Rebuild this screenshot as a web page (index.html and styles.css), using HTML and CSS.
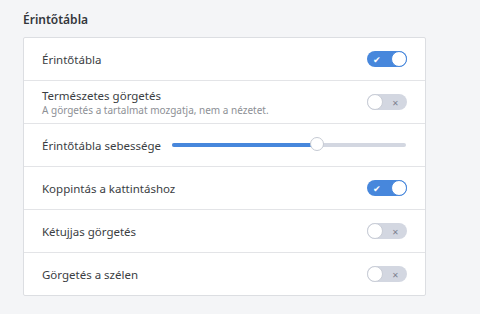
FILE: index.html
```html
<!DOCTYPE html>
<html lang="hu">
<head>
  <meta charset="UTF-8" />
  <title>Érintőtábla</title>
  <link rel="stylesheet" href="styles.css">
</head>
<body>
  <h2 class="section-title">Érintőtábla</h2>

  <div class="card">
    <div class="row">
      <span class="label">Érintőtábla</span>
      <span class="toggle on"><span class="mark">✔</span><span class="knob"></span></span>
    </div>
    <div class="row">
      <div class="texts">
        <span class="label">Természetes görgetés</span>
        <span class="sub">A görgetés a tartalmat mozgatja, nem a nézetet.</span>
      </div>
      <span class="toggle"><span class="knob"></span><span class="mark">✕</span></span>
    </div>
    <div class="row">
      <span class="label">Érintőtábla sebessége</span>
      <div class="slider">
        <div class="fill" style="width: 62%"></div>
        <div class="thumb" style="left: 62%"></div>
      </div>
    </div>
    <div class="row">
      <span class="label">Koppintás a kattintáshoz</span>
      <span class="toggle on"><span class="mark">✔</span><span class="knob"></span></span>
    </div>
    <div class="row">
      <span class="label">Kétujjas görgetés</span>
      <span class="toggle"><span class="knob"></span><span class="mark">✕</span></span>
    </div>
    <div class="row">
      <span class="label">Görgetés a szélen</span>
      <span class="toggle"><span class="knob"></span><span class="mark">✕</span></span>
    </div>
  </div>
</body>
</html>
```

FILE: styles.css
```css
body {
  margin: 0;
  background: #f4f5f7;
  font-family: "Noto Sans", sans-serif;
  color: #3a3d42;
  padding: 12px 54px 0 23px;
}
.section-title {
  font-size: 12px;
  font-weight: 600;
  margin: 0 0 9px 0;
  line-height: 16px;
  color: #33363b;
}
.card {
  background: #fff;
  border: 1px solid #dcdee2;
  border-radius: 2px;
}
.row {
  display: flex;
  align-items: center;
  justify-content: space-between;
  height: 42px;
  padding: 0 18px;
  border-top: 1px solid #e3e4e7;
}
.row:first-child {
  border-top: none;
}
.label {
  font-size: 11.5px;
  color: #3a3d42;
}
.texts {
  display: flex;
  flex-direction: column;
  line-height: 14px;
  padding-top: 2px;
}
.sub {
  font-size: 10px;
  color: #8d9096;
}
.toggle {
  display: flex;
  align-items: center;
  justify-content: space-between;
  width: 40px;
  height: 16px;
  border-radius: 8px;
  background: #d3d7e1;
  font-size: 8px;
  color: #7d8290;
  box-sizing: border-box;
}
.toggle.on {
  background: #4787dc;
  color: #fff;
  font-size: 9px;
}
.toggle .mark {
  padding: 0 8px;
}
.toggle.on .mark {
  padding: 0 6px;
}
.knob {
  width: 16px;
  height: 16px;
  border-radius: 50%;
  background: #fff;
  border: 1px solid #c9cdd6;
  box-sizing: border-box;
}
.toggle.on .knob {
  border-color: #4787dc;
}
.slider {
  position: relative;
  width: 234px;
  height: 4px;
  border-radius: 2px;
  background: #d3d7e1;
  margin-right: 1px;
}
.fill {
  height: 4px;
  border-radius: 2px;
  background: #4787dc;
}
.thumb {
  position: absolute;
  top: -6px;
  width: 14px;
  height: 14px;
  margin-left: -7px;
  border-radius: 50%;
  background: #fff;
  border: 1px solid #c5cad3;
  box-sizing: border-box;
}
```
